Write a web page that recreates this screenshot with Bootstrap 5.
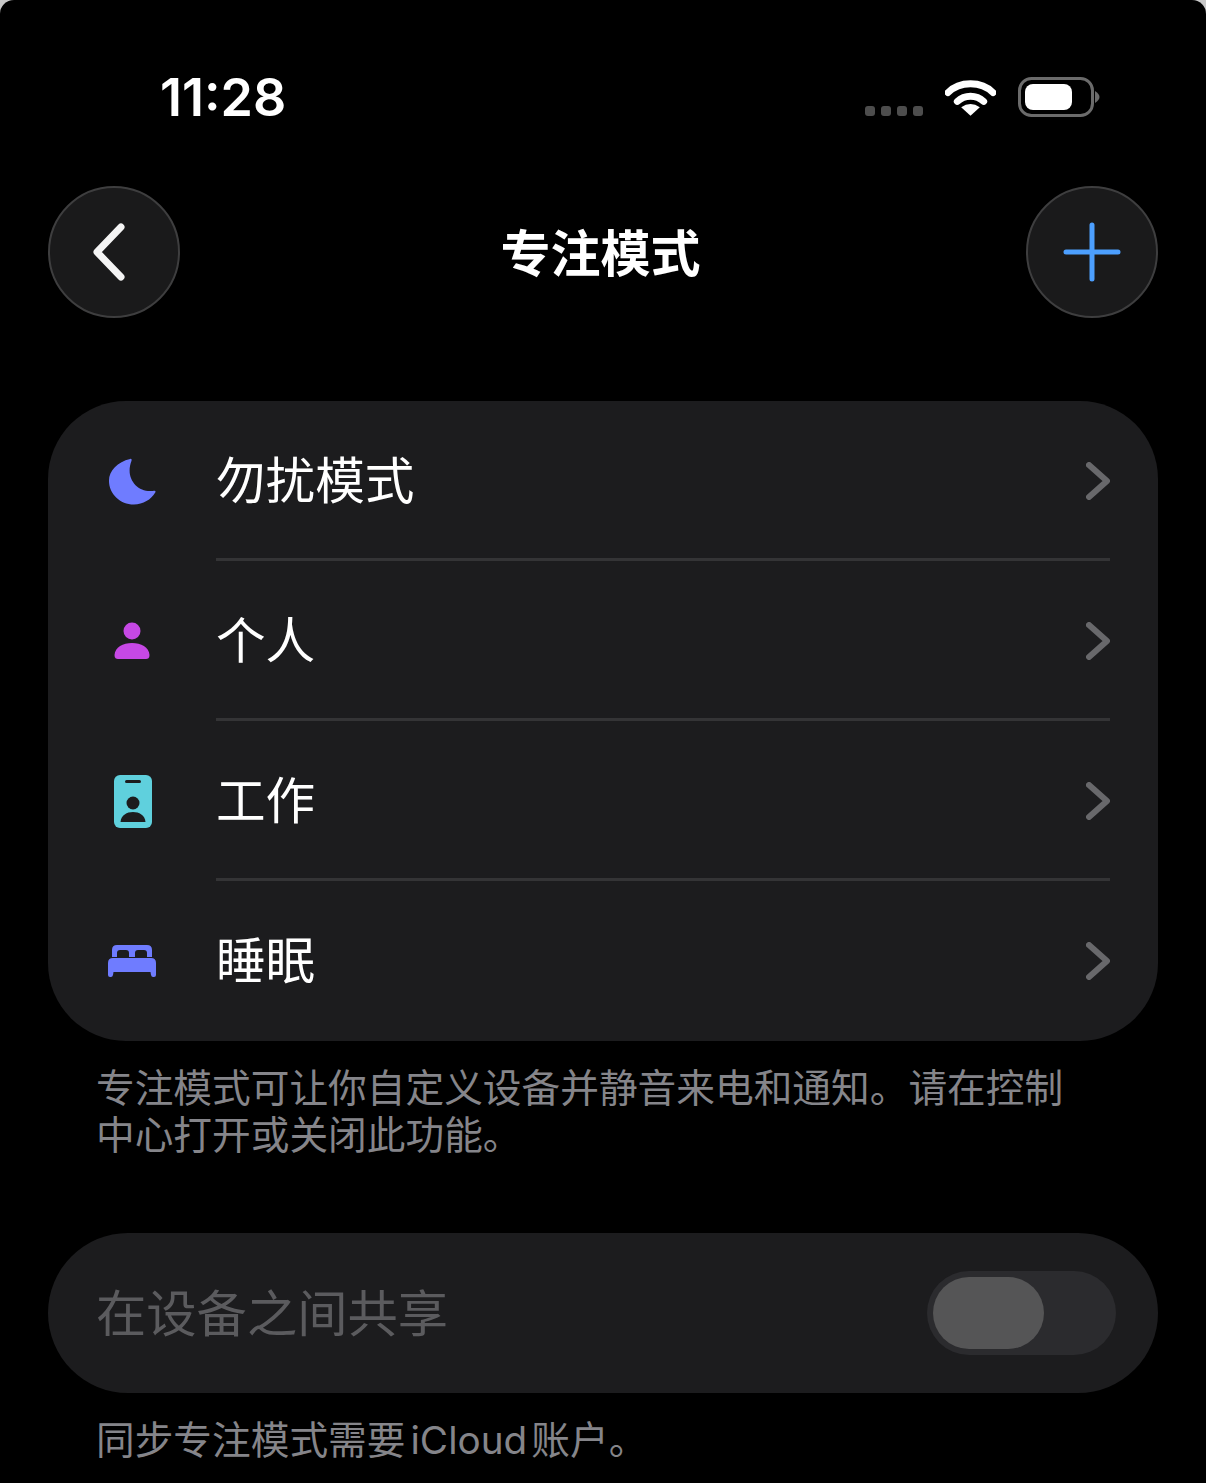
<!DOCTYPE html>
<html lang="zh">
<head>
<meta charset="utf-8"/>
<meta content="width=device-width, initial-scale=1.0" name="viewport"/>
<title>专注模式</title>
<link href="https://cdn.jsdelivr.net/npm/bootstrap@5.3.0/dist/css/bootstrap.min.css" rel="stylesheet"/>
<style>
    html, body { background: #c8c8c8; }
    body {
      width: 1206px;
      height: 1483px;
      overflow: hidden;
      color: #fff;
      font-family: Inter, "Noto Sans CJK SC", sans-serif;
    }
    .screen {
      height: 1483px;
      padding: 0 48px;
      background: #000;
      border-radius: 14px 14px 0 0;
    }
    .status-bar {
      height: 186px;
      padding: 67px 58px 0 112px;
    }
    .clock {
      font-size: 52px;
      font-weight: 600;
      line-height: 62px;
    }
    .status-icons { gap: 22px; margin-top: 10px; }
    .signal-dots { gap: 6px; margin-bottom: 1px; }
    .signal-dot {
      width: 10px;
      height: 10px;
      border-radius: 3px;
      background: #4d4d4d;
    }
    .round-btn {
      width: 132px;
      height: 132px;
      padding: 0;
      border-radius: 50%;
      background: #1a1a1b;
      border: 2px solid #3e3e3f;
    }
    .top-bar { height: 132px; margin-bottom: 83px; }
    .page-title {
      font-size: 50px;
      font-weight: 700;
      line-height: 1;
      margin: 4px 0 0 -5px;
    }
    .group-box {
      background: #1c1c1e;
      border-radius: 78px;
    }
    .group-row { height: 160px; padding: 0 48px 0 50px; }
    .row-icon { width: 68px; flex: none; }
    .row-body {
      height: 160px;
      margin-left: 50px;
      padding-top: 3px;
      border-bottom: 3px solid #343436;
    }
    .group-row:last-child .row-body { border-bottom-color: transparent; }
    .row-text { font-size: 49.600px; line-height: 1; padding-top: 2px; }
    .row-chevron { stroke: #68686b; }
    .foot-note {
      font-size: 38.7px;
      line-height: 47px;
      color: #85858a;
      padding: 0 88px 0 48px;
      margin: 0;
    }
    .note-one { padding-top: 24px; height: 192px; }
    .share-box { height: 160px; padding: 0 42px 0 48px; border-radius: 80px; }
    .share-text { font-size: 50.3px; line-height: 1; color: #5b5b5e; padding-top: 2px; }
    .toggle-track {
      width: 189px;
      height: 84px;
      padding: 6px;
      border-radius: 42px;
      background: #2b2b2e;
    }
    .toggle-knob {
      width: 111px;
      height: 72px;
      border-radius: 36px;
      background: #555556;
    }
    .note-two { padding-top: 24px; }
    .latin-word { margin: 0 4px 0 5px; }
    .icon-nudge { transform: translate(1px, 1px); }
</style>
</head>
<body>
<div class="screen">
  <div class="status-bar d-flex justify-content-between align-items-start">
    <div class="clock">11:28</div>
    <div class="status-icons d-flex align-items-center">
      <div class="signal-dots d-flex align-self-end">
        <span class="signal-dot"></span><span class="signal-dot"></span><span class="signal-dot"></span><span class="signal-dot"></span>
      </div>
      <svg width="51" height="38" viewBox="0 0 52 38">
        <path d="M3 14.500C15 2.500 37 2.500 49 14.500" fill="none" stroke="#fff" stroke-width="7" stroke-linecap="round"/>
        <path d="M12.500 23.500C20 16.500 32 16.500 39.500 23.500" fill="none" stroke="#fff" stroke-width="7" stroke-linecap="round"/>
        <path d="M26 38L16.500 29.500Q26 23 35.500 29.500Z" fill="#fff"/>
      </svg>
      <svg width="82" height="40" viewBox="0 0 82 40">
        <rect x="1.500" y="1.500" width="73" height="37" rx="12" fill="none" stroke="#6b6b6b" stroke-width="3"/>
        <rect x="7" y="7" width="47" height="26" rx="8" fill="#fff"/>
        <path d="M77 14Q81.500 17 81.500 20Q81.500 23 77 26Z" fill="#6b6b6b"/>
      </svg>
    </div>
  </div>

  <div class="top-bar d-flex justify-content-between align-items-center">
    <button class="round-btn btn d-flex align-items-center justify-content-center" type="button" aria-label="返回">
      <svg width="48" height="62" viewBox="0 0 48 62"><path d="M31 6L7 31L31 56" fill="none" stroke="#f4f4f4" stroke-width="7" stroke-linecap="round" stroke-linejoin="round"/></svg>
    </button>
    <h1 class="page-title">专注模式</h1>
    <button class="round-btn btn d-flex align-items-center justify-content-center" type="button" aria-label="添加">
      <svg width="60" height="60" viewBox="0 0 60 60"><path d="M30 3V57M4 30H56" fill="none" stroke="#4c9ffe" stroke-width="5" stroke-linecap="round"/></svg>
    </button>
  </div>

  <div class="group-box">
    <div class="group-row d-flex align-items-center">
      <div class="row-icon d-flex justify-content-center">
        <svg width="48" height="48" viewBox="0 0 50 50"><path d="M23 2C24.200 1.500 25 2.500 24.500 4C23 8 22.500 11 22.500 14C22.500 26 32 35.500 44 35.500C45.500 35.500 47 35.300 48 35.100C49.500 34.800 50 36 49.200 37.100C45 44.500 36.500 49.500 27 49.500C12.500 49.500 1 38.500 1 24.500C1 14.500 10 5 23 2Z" fill="#6f7cff"/></svg>
      </div>
      <div class="row-body flex-grow-1 d-flex align-items-center justify-content-between">
        <span class="row-text">勿扰模式</span>
        <svg width="24" height="38" viewBox="0 0 24 38"><path class="row-chevron" d="M3 3L21 19L3 35" fill="none" stroke-width="6" stroke-linecap="round" stroke-linejoin="round"/></svg>
      </div>
    </div>
    <div class="group-row d-flex align-items-center">
      <div class="row-icon d-flex justify-content-center">
        <svg width="36" height="38" viewBox="0 0 36 38"><circle cx="18" cy="9" r="8.500" fill="#c648e5"/><path d="M0.500 33C1 25 9 21 18 21C27 21 35 25 35.500 33C35.500 36 34 37 32 37H4C2 37 0.500 36 0.500 33Z" fill="#c648e5"/></svg>
      </div>
      <div class="row-body flex-grow-1 d-flex align-items-center justify-content-between">
        <span class="row-text">个人</span>
        <svg width="24" height="38" viewBox="0 0 24 38"><path class="row-chevron" d="M3 3L21 19L3 35" fill="none" stroke-width="6" stroke-linecap="round" stroke-linejoin="round"/></svg>
      </div>
    </div>
    <div class="group-row d-flex align-items-center">
      <div class="row-icon d-flex justify-content-center">
        <svg class="icon-nudge" width="38" height="54" viewBox="0 0 38 54"><rect width="38" height="53" rx="6" fill="#5fd0dd"/><rect x="11" y="5" width="16" height="3" rx="1.500" fill="#1c1c1e"/><circle cx="19" cy="28" r="6.500" fill="#1c1c1e"/><path d="M6.500 47C7 40 13 37 19 37C25 37 31 40 31.500 47Z" fill="#1c1c1e"/></svg>
      </div>
      <div class="row-body flex-grow-1 d-flex align-items-center justify-content-between">
        <span class="row-text">工作</span>
        <svg width="24" height="38" viewBox="0 0 24 38"><path class="row-chevron" d="M3 3L21 19L3 35" fill="none" stroke-width="6" stroke-linecap="round" stroke-linejoin="round"/></svg>
      </div>
    </div>
    <div class="group-row d-flex align-items-center">
      <div class="row-icon d-flex justify-content-center">
        <svg width="48" height="33" viewBox="0 0 48 33"><path d="M4 12V5Q4 0 9 0H39Q44 0 44 5V12H39V8Q39 5 36 5H30Q27 5 27 8V12H21V8Q21 5 18 5H12Q9 5 9 8V12Z" fill="#6f7cff"/><path d="M0 18Q0 13 5 13H43Q48 13 48 18V30Q48 32 46 32H45Q43.500 32 43 30L42.500 27H5.500L5 30Q4.500 32 3 32H2Q0 32 0 30Z" fill="#6f7cff"/></svg>
      </div>
      <div class="row-body flex-grow-1 d-flex align-items-center justify-content-between">
        <span class="row-text">睡眠</span>
        <svg width="24" height="38" viewBox="0 0 24 38"><path class="row-chevron" d="M3 3L21 19L3 35" fill="none" stroke-width="6" stroke-linecap="round" stroke-linejoin="round"/></svg>
      </div>
    </div>
  </div>

  <p class="foot-note note-one">专注模式可让你自定义设备并静音来电和通知。请在控制中心打开或关闭此功能。</p>

  <div class="group-box share-box d-flex align-items-center justify-content-between">
    <span class="share-text">在设备之间共享</span>
    <div class="toggle-track"><div class="toggle-knob"></div></div>
  </div>

  <p class="foot-note note-two">同步专注模式需要<span class="latin-word">iCloud</span>账户。</p>
</div>
<script src="https://cdn.jsdelivr.net/npm/bootstrap@5.3.0/dist/js/bootstrap.bundle.min.js"></script>
</body>
</html>
